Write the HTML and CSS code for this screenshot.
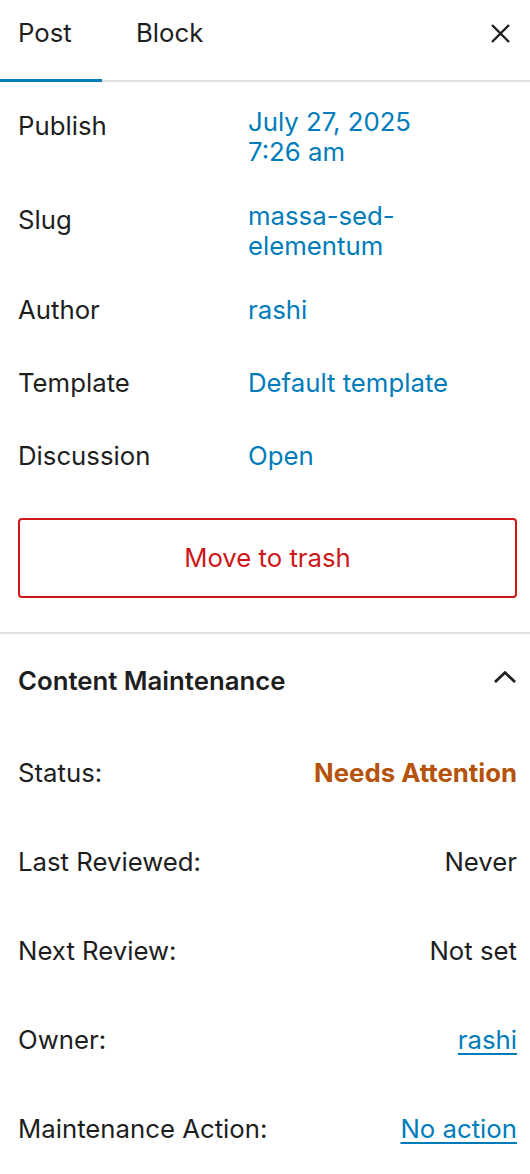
FILE: index.html
```html
<!DOCTYPE html>
<html lang="en">
<head>
<meta charset="utf-8">
<title>Post settings</title>
<link rel="stylesheet" href="styles.css">
</head>
<body>
<div class="sidebar">
  <div class="tabs">
    <div class="tab tab-post active">Post</div>
    <div class="tab tab-block">Block</div>
    <button class="close" aria-label="Close">
      <svg width="19" height="19" viewBox="0 0 19 19"><path d="M1 1 L18 18 M18 1 L1 18" stroke="#1e1e1e" stroke-width="2.4" fill="none"/></svg>
    </button>
  </div>

  <div class="panel">
    <div class="rows">
      <div class="row multi"><div class="label">Publish</div><div class="value">July 27, 2025<br>7:26 am</div></div>
      <div class="row multi"><div class="label">Slug</div><div class="value">massa-sed-<br>elementum</div></div>
      <div class="row"><div class="label">Author</div><div class="value">rashi</div></div>
      <div class="row"><div class="label">Template</div><div class="value">Default template</div></div>
      <div class="row"><div class="label">Discussion</div><div class="value">Open</div></div>
    </div>
    <button class="trash">Move to trash</button>
  </div>

  <div class="section">
    <div class="section-head">
      <div class="section-title">Content Maintenance</div>
      <svg class="chevron" width="22" height="12" viewBox="0 0 22 12"><path d="M1 11 L11 1.6 L21 11" stroke="#1e1e1e" stroke-width="2.8" fill="none"/></svg>
    </div>
    <div class="info-rows">
      <div class="info"><span class="info-label">Status:</span><span class="info-value warn">Needs Attention</span></div>
      <div class="info"><span class="info-label">Last Reviewed:</span><span class="info-value">Never</span></div>
      <div class="info"><span class="info-label">Next Review:</span><span class="info-value">Not set</span></div>
      <div class="info"><span class="info-label">Owner:</span><a class="info-value link" href="#">rashi</a></div>
      <div class="info"><span class="info-label">Maintenance Action:</span><a class="info-value link" href="#">No action</a></div>
    </div>
  </div>
</div>
</body>
</html>
```

FILE: styles.css
```css
html, body {
  margin: 0;
  padding: 0;
  background: #fff;
}
body {
  font-family: Inter, "Noto Sans", sans-serif;
  font-size: 25.75px;
  line-height: 30px;
  color: #1e1e1e;
}
.sidebar {
  width: 530px;
}
.tabs {
  display: flex;
  align-items: flex-start;
  height: 82px;
  box-shadow: inset 0 -2px 0 #e0e0e0;
}
.tab {
  height: 82px;
  box-sizing: border-box;
  padding-top: 18px;
}
.tab-post {
  width: 102px;
  padding-left: 18px;
}
.tab-block {
  padding-left: 34px;
}
.tab.active {
  box-shadow: inset 0 -3px 0 #007cba;
}
.close {
  margin-left: auto;
  margin-top: 24px;
  margin-right: 20px;
  padding: 0;
  border: 0;
  background: none;
  width: 19px;
  height: 19px;
  display: block;
}
.close svg {
  display: block;
}
.panel {
  padding: 25px 13px 34px 18px;
  border-bottom: 2px solid #e0e0e0;
}
.row {
  display: flex;
  align-items: flex-start;
  min-height: 73px;
  padding-bottom: 34px;
  box-sizing: border-box;
}
.label {
  width: 230px;
  flex: none;
}
.row.multi .label {
  padding-top: 4px;
}
.value {
  color: #007cba;
}
.trash {
  display: block;
  width: 100%;
  height: 80px;
  margin-top: 4px;
  border: 2px solid #cc1818;
  border-radius: 4px;
  background: #fff;
  color: #cc1818;
  font: inherit;
  text-align: center;
  padding: 0;
}
.section {
  padding: 32px 13px 0 18px;
}
.section-head {
  display: flex;
  align-items: flex-start;
  justify-content: space-between;
}
.section-title {
  font-weight: 600;
}
.chevron {
  display: block;
  margin-top: 5px;
  margin-right: 1px;
}
.info-rows {
  display: flex;
  flex-direction: column;
  gap: 59px;
  margin-top: 62px;
}
.info {
  display: flex;
  justify-content: space-between;
  height: 30px;
}
.warn {
  color: #b45309;
  font-weight: 700;
}
.link {
  color: #007cba;
  text-decoration: underline;
  text-underline-offset: 4px;
  text-decoration-thickness: 1.5px;
}
```
